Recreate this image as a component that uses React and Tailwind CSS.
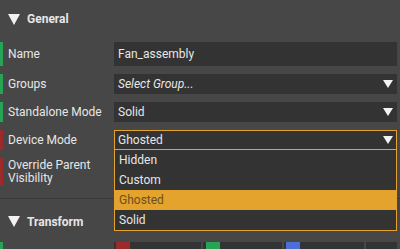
import React from "react";

function Tri({ className = "" }) {
  return (
    <svg width="12" height="11" viewBox="0 0 12 11" className={className}>
      <polygon points="0,0 12,0 6,11" fill="#f2f2f2" />
    </svg>
  );
}

function Arrow() {
  return (
    <svg width="10" height="8" viewBox="0 0 10 8">
      <polygon points="0,0 10,0 5,8" fill="#f4f4f4" />
    </svg>
  );
}

function Row({ bar, label, h = "h-[20px]", children }) {
  return (
    <div className={`flex ${h}`}>
      <div className={`w-[3px] ${bar}`} />
      <div className="w-[111px] pl-[5px] flex items-center leading-[13px]">{label}</div>
      <div className="flex-1 mr-[3px] relative">{children}</div>
    </div>
  );
}

export default function App() {
  return (
    <div
      className="w-[400px] h-[249px] overflow-hidden bg-[#474747] text-[#e6e6e6] text-[12px]"
      style={{ fontFamily: "Roboto, 'Noto Sans', sans-serif" }}
    >
      <div className="h-[42px] flex items-center pl-[8px] gap-[7px] pb-[4px]">
        <Tri />
        <span className="font-bold text-[12px]">General</span>
      </div>
      <div className="flex flex-col gap-[8px]">
        <Row bar="bg-[#27a356]" label="Name" h="h-[24px]">
          <div className="h-full bg-[#333333] flex items-center pl-[4px]">Fan_assembly</div>
        </Row>
        <Row bar="bg-[#27a356]" label="Groups">
          <div className="h-full bg-[#333333] flex items-center justify-between pl-[4px] pr-[4px]">
            <span className="italic">Select Group...</span>
            <Arrow />
          </div>
        </Row>
        <Row bar="bg-[#27a356]" label="Standalone Mode">
          <div className="h-full bg-[#333333] flex items-center justify-between pl-[4px] pr-[4px]">
            <span>Solid</span>
            <Arrow />
          </div>
        </Row>
        <Row bar="bg-[#9c2a2a]" label="Device Mode">
          <div className="absolute top-0 left-0 right-0 z-10 border border-[#e3a32d] bg-[#333333]">
            <div className="h-[19px] flex items-center justify-between pl-[3px] pr-[3px] border-b border-[#e3a32d]">
              <span>Ghosted</span>
              <Arrow />
            </div>
            <div className="h-[20px] flex items-center pl-[4px]">Hidden</div>
            <div className="h-[20px] flex items-center pl-[4px]">Custom</div>
            <div className="h-[20px] flex items-center pl-[4px] bg-[#e3a32d] text-[#6e4f1c]">Ghosted</div>
            <div className="h-[20px] flex items-center pl-[4px]">Solid</div>
          </div>
        </Row>
        <Row bar="bg-[#9c2a2a]" label={<span>Override Parent<br />Visibility</span>} h="h-[28px]" />
      </div>
      <div className="mt-[12px] h-[1px] bg-[#3a3a3a]" />
      <div className="h-[43px] flex items-center pl-[8px] gap-[7px] pt-[2px]">
        <Tri />
        <span className="font-bold text-[12px]">Transform</span>
      </div>
      <div className="flex h-[20px]">
        <div className="w-[3px] bg-[#27a356]" />
        <div className="w-[111px]" />
        <div className="flex-1 flex gap-[2px] mr-[3px]">
          <div className="w-[87px] bg-[#333333] pl-[2px]">
            <div className="w-[14px] h-full bg-[#9c2a2a]" />
          </div>
          <div className="w-[79px] bg-[#333333] pl-[3px]">
            <div className="w-[14px] h-full bg-[#27a356]" />
          </div>
          <div className="w-[80px] bg-[#333333] pl-[2px]">
            <div className="w-[14px] h-full bg-[#4a6fd6]" />
          </div>
          <div className="flex-1 bg-[#333333]" />
        </div>
      </div>
    </div>
  );
}
